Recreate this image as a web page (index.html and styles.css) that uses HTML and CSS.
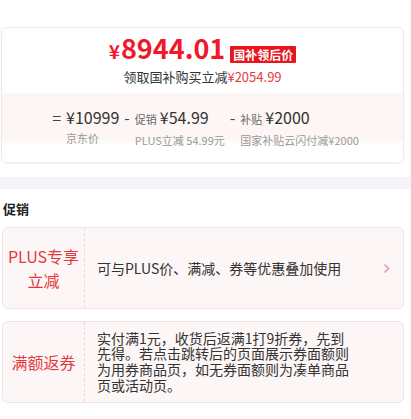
FILE: index.html
```html
<!DOCTYPE html>
<html lang="zh-CN">
<head>
    <meta charset="UTF-8">
    <meta name="viewport" content="width=device-width, initial-scale=1.0">
    <title>价格详情</title>
    <link rel="stylesheet" href="styles.css">
</head>
<body>
    <div class="resumen">
        <div class="precio-card">
            <div class="precio-main">
                <div class="precio-fila">
                    <span class="precio"><span class="yen">¥</span>8944.01</span>
                    <span class="etiqueta">国补领后价</span>
                </div>
                <div class="ahorro">领取国补购买立减<span class="rojo">¥2054.99</span></div>
            </div>
            <div class="precio-detalle">
                <div class="item">
                    <span class="signo">=</span>
                    <div class="bloque">
                        <div class="arriba"><span class="monto">¥10999</span></div>
                        <div class="abajo">京东价</div>
                    </div>
                </div>
                <div class="item">
                    <span class="signo">-</span>
                    <div class="bloque">
                        <div class="arriba"><span class="mini">促销</span><span class="monto">¥54.99</span></div>
                        <div class="abajo">PLUS立减 54.99元</div>
                    </div>
                </div>
                <div class="item">
                    <span class="signo">-</span>
                    <div class="bloque">
                        <div class="arriba"><span class="mini">补贴</span><span class="monto">¥2000</span></div>
                        <div class="abajo">国家补贴云闪付减¥2000</div>
                    </div>
                </div>
            </div>
        </div>
    </div>

    <div class="franja"></div>

    <div class="promos">
        <h2>促销</h2>

        <div class="promo">
            <div class="promo-label">PLUS专享<br>立减</div>
            <div class="promo-body">
                <div class="promo-texto">可与PLUS价、满减、券等优惠叠加使用</div>
                <svg class="flecha" width="7" height="11" viewBox="0 0 7 11">
                    <path d="M1.5 1.5 L5.5 5.5 L1.5 9.5" fill="none" stroke="#d6a0b2" stroke-width="1.6"/>
                </svg>
            </div>
        </div>

        <div class="promo">
            <div class="promo-label">满额返券</div>
            <div class="promo-body">
                <div class="promo-texto multi">实付满1元，收货后返满1打9折券，先到先得。若点击跳转后的页面展示券面额则为用券商品页，如无券面额则为凑单商品页或活动页。</div>
            </div>
        </div>
    </div>
</body>
</html>
```

FILE: styles.css
```css
body {
    margin: 0;
    background-color: #fff;
    font-family: "Noto Sans CJK SC", "Noto Sans", sans-serif;
    color: #333;
}

.resumen {
    padding: 27px 7px 0 1px;
}

.precio-card {
    border: 1px solid #ebebeb;
    border-radius: 6px;
    overflow: hidden;
    box-shadow: 0 1px 2px rgba(0, 0, 0, 0.05);
}

.precio-main {
    height: 65px;
    padding-top: 7px;
    box-sizing: border-box;
    text-align: center;
}

.precio-fila {
    display: flex;
    justify-content: center;
    align-items: flex-end;
    height: 32px;
}

.precio {
    font-size: 27px;
    line-height: 32px;
    font-weight: 600;
    color: #f0192b;
}

.yen {
    font-size: 19px;
    margin-right: 1px;
}

.etiqueta {
    background-color: #e8141e;
    color: #fff;
    font-size: 12px;
    font-weight: bold;
    line-height: 17px;
    padding: 0 3px;
    margin-left: 5px;
    margin-bottom: 4px;
    border-radius: 1px;
}

.ahorro {
    font-size: 13px;
    line-height: 18px;
    margin-top: 1px;
    color: #333;
}

.rojo {
    color: #e4393c;
}

.precio-detalle {
    height: 69px;
    box-sizing: border-box;
    padding-top: 14px;
    padding-left: 6px;
    display: flex;
    justify-content: center;
    gap: 5px;
    background: linear-gradient(#fdf6f5 0, #fdf6f5 46px, #fff 51px);
}

.item {
    display: flex;
}

.signo {
    font-size: 16px;
    line-height: 20px;
    color: #444;
    margin-right: 5px;
}

.arriba {
    line-height: 20px;
    white-space: nowrap;
}

.monto {
    font-size: 16px;
    color: #333;
}

.mini {
    font-size: 11px;
    color: #666;
    margin-right: 3px;
}

.abajo {
    font-size: 11px;
    line-height: 16px;
    margin-top: 3px;
    color: #999;
    white-space: nowrap;
}

.franja {
    height: 12px;
    margin-top: 14px;
    background-color: #f4f4f9;
}

.promos {
    padding: 0 7px 0 2px;
}

h2 {
    font-size: 13px;
    line-height: 20px;
    margin: 10px 0 8px 1px;
    color: #222;
}

.promo {
    display: flex;
    height: 82px;
    box-sizing: border-box;
    border: 1px solid #f1e3e5;
    border-radius: 6px;
    background-color: #fdf6f6;
    margin-bottom: 12px;
}

.promo-label {
    width: 81px;
    flex-shrink: 0;
    display: flex;
    align-items: center;
    justify-content: center;
    text-align: center;
    font-size: 16px;
    line-height: 24px;
    color: #e4393c;
    border-right: 1px dashed #ead8dc;
}

.promo-body {
    flex: 1;
    display: flex;
    align-items: center;
    padding-left: 12px;
    padding-right: 13px;
}

.promo-texto {
    width: 260px;
    font-size: 14px;
    line-height: 18px;
    color: #333;
}

.promo-texto.multi {
    line-height: 15.6px;
}

.flecha {
    margin-left: auto;
}
```
